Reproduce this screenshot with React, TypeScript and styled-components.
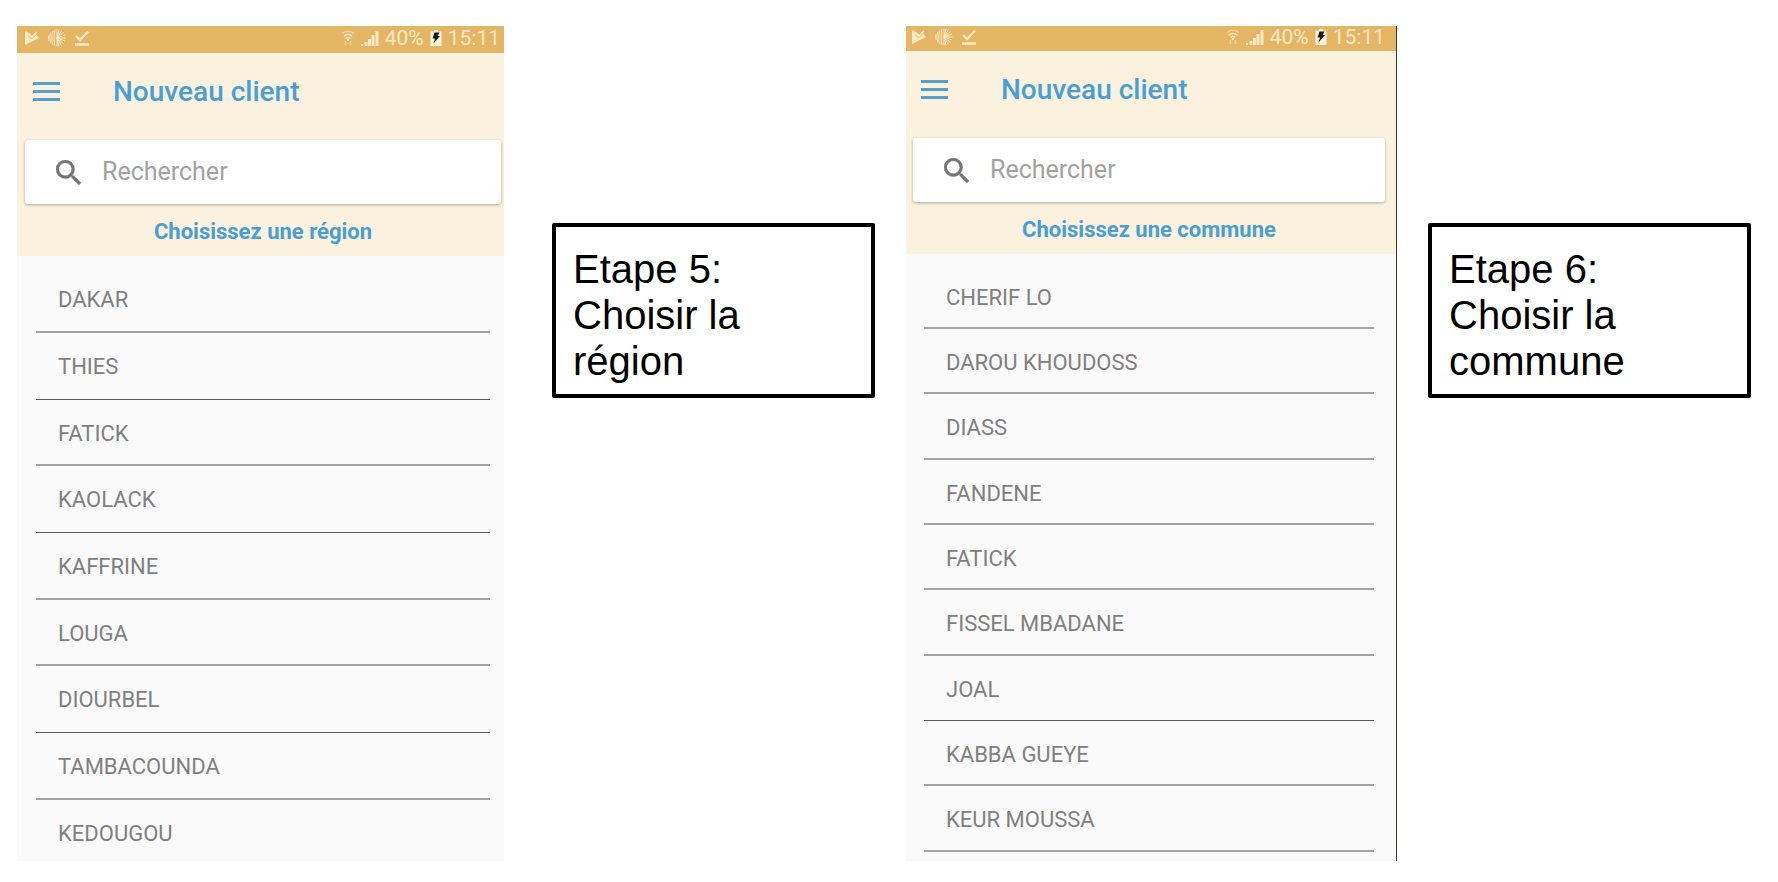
import React from "react";
import styled, { createGlobalStyle } from "styled-components";

const GlobalStyle = createGlobalStyle`
  * { box-sizing: border-box; }
  body { margin: 0; background: #fff; }
`;

const Page = styled.main`
  display: grid;
  grid-template-columns: 858fr 845fr;
  column-gap: 31px;
  align-items: start;
  padding: 26px 27px 21px 17px;
`;

const Step = styled.section<{ $columns: string; $gap: number }>`
  display: grid;
  grid-template-columns: ${(p) => p.$columns};
  column-gap: ${(p) => p.$gap}px;
  align-items: start;
`;

const Note = styled.p`
  margin: 197px 0 0;
  padding: 19px 100px 10px 17px;
  border: 4px solid #000;
  border-radius: 2px;
  font: 40px/46px "Liberation Sans", Arial, sans-serif;
  color: #000;
`;

const Phone = styled.article<{ $edge: boolean }>`
  min-width: 0;
  background: #fafafa;
  font-family: Roboto, sans-serif;
  border-right: ${(p) => (p.$edge ? "1px solid #33382c" : "none")};
`;

const StatusBar = styled.div<{ $height: number; $start: number; $end: number }>`
  display: flex;
  align-items: center;
  justify-content: space-between;
  height: ${(p) => p.$height}px;
  padding: 0 ${(p) => p.$end}px 3px ${(p) => p.$start}px;
  background: #e4b565;
  color: #fbe9c6;
  font-size: 21px;
  line-height: 24px;
`;

const StatusGroup = styled.div<{ $gap: number }>`
  display: flex;
  align-items: center;
  gap: ${(p) => p.$gap}px;

  svg { display: block; }
`;

const Header = styled.header<{ $start: number; $end: number }>`
  padding: 0 ${(p) => p.$end}px 0 ${(p) => p.$start}px;
  background: #faf1de;
`;

const AppBar = styled.div`
  display: flex;
  align-items: center;
  gap: 53px;
  height: 76px;
  margin-bottom: 11px;
  padding-left: 8px;
`;

const MenuButton = styled.button`
  display: block;
  padding: 0;
  border: 0;
  background: none;
  color: #559fc8;

  svg { display: block; }
`;

const Title = styled.h1`
  margin: 0;
  padding-top: 2px;
  font-size: 28px;
  line-height: 32px;
  font-weight: 500;
  color: #4a9fd2;
`;

const SearchBox = styled.label`
  display: flex;
  align-items: center;
  gap: 21px;
  height: 64px;
  padding: 0 31px;
  border-radius: 3px;
  background: #fff;
  box-shadow: 0 1px 3px rgba(90, 80, 60, 0.45);

  svg { flex: none; display: block; }
`;

const SearchInput = styled.input`
  flex: 1;
  min-width: 0;
  padding: 0;
  border: 0;
  outline: 0;
  background: none;
  font: 25px/30px Roboto, sans-serif;
  color: #777;

  &::placeholder { color: #a2a2a2; opacity: 1; }
`;

const Prompt = styled.h2`
  margin: 0;
  padding-top: 3px;
  font-size: 22px;
  line-height: 49px;
  font-weight: 700;
  text-align: center;
  color: #4a9fd2;
`;

const List = styled.ul<{ $rows: string; $padding: string }>`
  display: grid;
  grid-template-rows: ${(p) => p.$rows};
  margin: 0;
  padding: ${(p) => p.$padding};
  list-style: none;
`;

const Row = styled.li<{ $line: "soft" | "crisp" | "none" }>`
  display: flex;
  border-bottom: ${(p) =>
    ({ soft: "2px solid #a4a4a5", crisp: "1px solid #58585a", none: "0" })[p.$line]};
`;

const Choice = styled.button`
  flex: 1;
  display: flex;
  align-items: flex-start;
  padding: 21px 22px 0;
  border: 0;
  background: none;
  font: 22px/26px Roboto, sans-serif;
  text-align: left;
  color: #808080;
`;

const PlayIcon = () => (
  <svg width="16" height="16" viewBox="0 0 16 16" aria-hidden="true">
    <path d="M1 1l4 2 3 3 3-3 1.500 2L15 8 1 15z" fill="currentColor" />
    <path d="M4 5.500l3.500 3.500 6-6" stroke="#e4b565" strokeWidth="1" fill="none" />
    <path d="M5 4l3 3 5-5" stroke="currentColor" strokeWidth="1.500" fill="none" />
  </svg>
);

const FingerprintIcon = () => (
  <svg width="18" height="18" viewBox="0 0 18 18" aria-hidden="true" fill="none" stroke="currentColor" strokeWidth="1">
    <path d="M1 6c-.6 2-.6 4 0 6M3 3.500c-1.400 3.500-1.400 7.500 0 11M5 2c-1.600 4.500-1.600 9.500 0 14M7 1c-1.200 5-1.200 11 0 16" />
    <path d="M9 .5v17M9 9h8.500M9 9l8-3M9 9l8 3M9 9l6.500-5.500M9 9l6.500 5.500M9 9l4.500-7.500M9 9l4.500 7.500M9 9l2-8.300M9 9l2 8.300" />
  </svg>
);

const DoneIcon = () => (
  <svg width="16" height="18" viewBox="0 0 16 18" aria-hidden="true" fill="none" stroke="currentColor">
    <path d="M2 7l4 4 8-8.500" strokeWidth="2.400" />
    <path d="M1 15.500h14" strokeWidth="2.600" />
  </svg>
);

const WifiIcon = () => (
  <svg width="14" height="16" viewBox="0 0 14 16" aria-hidden="true" fill="none" stroke="currentColor">
    <path d="M.8 3.800c3.600-3.400 8.800-3.400 12.400 0" strokeWidth="1.400" opacity=".6" />
    <path d="M2.700 6.200c2.500-2.300 6.100-2.300 8.600 0M4.700 8.400c1.400-1.200 3.200-1.200 4.600 0" strokeWidth="1.500" />
    <path d="M7 9v2" strokeWidth="2" />
    <path d="M4.500 11v4M9.500 11v4" strokeWidth="1.600" opacity=".5" />
  </svg>
);

const SignalIcon = () => (
  <svg width="18" height="17" viewBox="0 0 18 17" aria-hidden="true" fill="currentColor">
    <path d="M0 14h2v2H0zM3.500 12h3v4h-3zM7 9h3v7H7zM10.500 5h3v11h-3zM14.500 1h3v15h-3z" />
  </svg>
);

const BatteryIcon = () => (
  <svg width="12" height="17" viewBox="0 0 12 17" aria-hidden="true">
    <path d="M4 0h4v1.500h3.500V16H.5V1.500H4z" fill="#fff3dc" />
    <path d="M4.500 2.500h5L7.500 6h2.500l-6.500 7.500L5 8.500H2.500z" fill="#1c1a18" />
  </svg>
);

const MenuIcon = () => (
  <svg width="27" height="19" viewBox="0 0 27 19" aria-hidden="true" fill="currentColor">
    <path d="M0 0h27v3H0zM0 8h27v3H0zM0 16h27v3H0z" />
  </svg>
);

const SearchIcon = () => (
  <svg width="25" height="25" viewBox="3 3 17.500 17.500" aria-hidden="true" fill="#757575" stroke="#757575" strokeWidth=".3">
    <path d="M15.500 14h-.79l-.28-.27A6.471 6.471 0 0 0 16 9.500 6.500 6.500 0 1 0 9.500 16c1.610 0 3.090-.59 4.230-1.570l.27.28v.79l5 4.990L20.490 19l-4.990-5zm-6 0C7.010 14 5 11.990 5 9.500S7.010 5 9.500 5 14 7.010 14 9.500 11.990 14 9.500 14z" />
  </svg>
);

interface ScreenProps {
  prompt: string;
  choices: string[];
  crisp: number[];
  openEnded?: boolean;
  edge?: boolean;
  barHeight: number;
  barStart: number;
  barEnd: number;
  headerStart: number;
  headerEnd: number;
  rows: string;
  listPadding: string;
}

function Screen(p: ScreenProps) {
  return (
    <Phone $edge={!!p.edge}>
      <StatusBar $height={p.barHeight} $start={p.barStart} $end={p.barEnd}>
        <StatusGroup $gap={8}>
          <PlayIcon />
          <FingerprintIcon />
          <DoneIcon />
        </StatusGroup>
        <StatusGroup $gap={6}>
          <WifiIcon />
          <SignalIcon />
          <span>40%</span>
          <BatteryIcon />
          <span>15:11</span>
        </StatusGroup>
      </StatusBar>
      <Header $start={p.headerStart} $end={p.headerEnd}>
        <AppBar>
          <MenuButton type="button" aria-label="Menu">
            <MenuIcon />
          </MenuButton>
          <Title>Nouveau client</Title>
        </AppBar>
        <SearchBox>
          <SearchIcon />
          <SearchInput type="text" placeholder="Rechercher" aria-label="Rechercher" />
        </SearchBox>
        <Prompt>{p.prompt}</Prompt>
      </Header>
      <List $rows={p.rows} $padding={p.listPadding}>
        {p.choices.map((name, i) => {
          const last = p.openEnded && i === p.choices.length - 1;
          return (
            <Row key={name} $line={last ? "none" : p.crisp.includes(i) ? "crisp" : "soft"}>
              <Choice type="button">{name}</Choice>
            </Row>
          );
        })}
      </List>
    </Phone>
  );
}

const regions = [
  "DAKAR", "THIES", "FATICK", "KAOLACK", "KAFFRINE",
  "LOUGA", "DIOURBEL", "TAMBACOUNDA", "KEDOUGOU",
];

const communes = [
  "CHERIF LO", "DAROU KHOUDOSS", "DIASS", "FANDENE", "FATICK",
  "FISSEL MBADANE", "JOAL", "KABBA GUEYE", "KEUR MOUSSA",
];

export default function App() {
  return (
    <>
      <GlobalStyle />
      <Page>
        <Step $columns="487fr 323fr" $gap={48}>
          <Screen
            prompt="Choisissez une région"
            choices={regions}
            crisp={[1, 3, 6]}
            openEnded
            barHeight={27}
            barStart={7}
            barEnd={4}
            headerStart={8}
            headerEnd={3}
            rows="repeat(2, 67px 67px 66px) 67px 67px 61px"
            listPadding="10px 14px 0 19px"
          />
          <Note>
            Etape 5:
            <br />
            Choisir la
            <br />
            région
          </Note>
        </Step>
        <Step $columns="491fr 323fr" $gap={31}>
          <Screen
            prompt="Choisissez une commune"
            choices={communes}
            crisp={[6]}
            edge
            barHeight={25}
            barStart={5}
            barEnd={11}
            headerStart={7}
            headerEnd={11}
            rows="repeat(3, 65px 65px 66px)"
            listPadding="10px 22px 9px 18px"
          />
          <Note>
            Etape 6:
            <br />
            Choisir la
            <br />
            commune
          </Note>
        </Step>
      </Page>
    </>
  );
}
